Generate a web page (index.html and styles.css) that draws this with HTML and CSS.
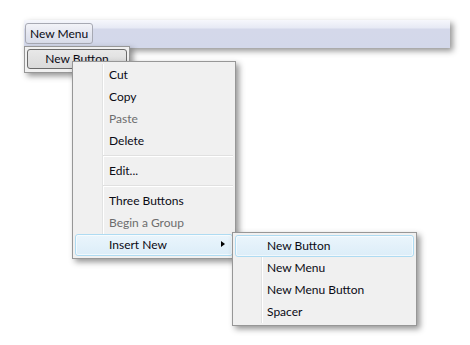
FILE: index.html
```html
<!DOCTYPE html>
<html>
<head>
<meta charset="utf-8">
<link rel="stylesheet" href="styles.css">
</head>
<body>
<div class="stage">
  <div class="toolbar">
    <div class="tb-btn">New Menu</div>
  </div>

  <div class="dropdown">
    <div class="dd-btn">New Button</div>
  </div>

  <div class="menu ctx">
    <div class="item">Cut</div>
    <div class="item">Copy</div>
    <div class="item disabled">Paste</div>
    <div class="item">Delete</div>
    <div class="sep"></div>
    <div class="item">Edit...</div>
    <div class="sep"></div>
    <div class="item">Three Buttons</div>
    <div class="item disabled">Begin a Group</div>
    <div class="item hot has-sub">Insert New<span class="arrow"></span></div>
  </div>

  <div class="menu sub">
    <div class="item hot">New Button</div>
    <div class="item">New Menu</div>
    <div class="item">New Menu Button</div>
    <div class="item">Spacer</div>
  </div>
</div>
</body>
</html>
```
FILE: styles.css
```css
html, body {
  margin: 0;
  padding: 0;
  background: #ffffff;
}
body {
  font-family: Lato, "Liberation Sans", sans-serif;
  font-size: 12px;
  color: #0a0a14;
}
.stage {
  position: relative;
  width: 470px;
  height: 345px;
  padding: 20px 0 0 24px;
  box-sizing: border-box;
}
.toolbar {
  width: 426px;
  height: 28px;
  box-sizing: border-box;
  padding: 3px 0 0 1px;
  background: linear-gradient(to bottom, #f6f7fc 0px, #e6e9f4 8px, #d4d8ea 9px, #d3d8ea 100%);
  box-shadow: 3px 3px 6px rgba(0,0,0,0.42);
}
.tb-btn {
  display: inline-flex;
  align-items: center;
  height: 21px;
  box-sizing: border-box;
  padding: 0 4px 0 4px;
  border: 1px solid #a7a9b3;
  border-radius: 3px;
  background: linear-gradient(to bottom, #f2f3f8 0%, #e4e6f0 50%, #d8dce9 100%);
}
.dropdown {
  position: absolute;
  left: 24px;
  top: 46px;
  width: 106px;
  height: 27px;
  box-sizing: border-box;
  padding: 2px;
  border: 1px solid #979797;
  background: #f0f0f0;
  box-shadow: 3px 3px 6px rgba(0,0,0,0.42);
}
.dd-btn {
  height: 20px;
  box-sizing: border-box;
  border: 1px solid #6a6a6a;
  border-radius: 3px;
  background: linear-gradient(to bottom, #e8e8e8, #dadada);
  text-align: center;
  line-height: 18px;
}
.menu {
  position: absolute;
  box-sizing: border-box;
  padding: 2px;
  border: 1px solid #979797;
  background: #f0f0f0;
  box-shadow: 3px 3px 6px rgba(0,0,0,0.42);
}
.menu::before {
  content: "";
  position: absolute;
  top: 2px;
  bottom: 2px;
  width: 1px;
  background: #e2e3e3;
  box-shadow: 1px 0 0 #ffffff;
}
.ctx {
  left: 72px;
  top: 61px;
  width: 164px;
}
.ctx::before { left: 29px; }
.sub {
  left: 232px;
  top: 232px;
  width: 185px;
}
.sub::before { left: 28px; }
.item {
  position: relative;
  height: 22px;
  line-height: 20px;
  box-sizing: border-box;
  padding-left: 33px;
  border: 1px solid transparent;
  border-radius: 3px;
}
.sub .item { padding-left: 31px; }
.item.disabled { color: #6d6d6d; }
.item.hot {
  border-color: #aedbf2;
  background: linear-gradient(to bottom, #eaf5fc 0%, #dcedf8 100%);
}
.item.hot::after {
  content: "";
  position: absolute;
  left: 0;
  right: 0;
  top: 0;
  bottom: 0;
  border: 1px solid rgba(255,255,255,0.6);
  border-radius: 2px;
}
.arrow {
  position: absolute;
  right: 7px;
  top: 6px;
  width: 0;
  height: 0;
  border-top: 3.5px solid transparent;
  border-bottom: 3.5px solid transparent;
  border-left: 4px solid #000;
}
.sep {
  position: relative;
  height: 8px;
}
.sep::after {
  content: "";
  position: absolute;
  left: 28px;
  right: 0;
  top: 3px;
  height: 1px;
  background: #e0e0e0;
  box-shadow: 0 1px 0 #ffffff;
}
```
